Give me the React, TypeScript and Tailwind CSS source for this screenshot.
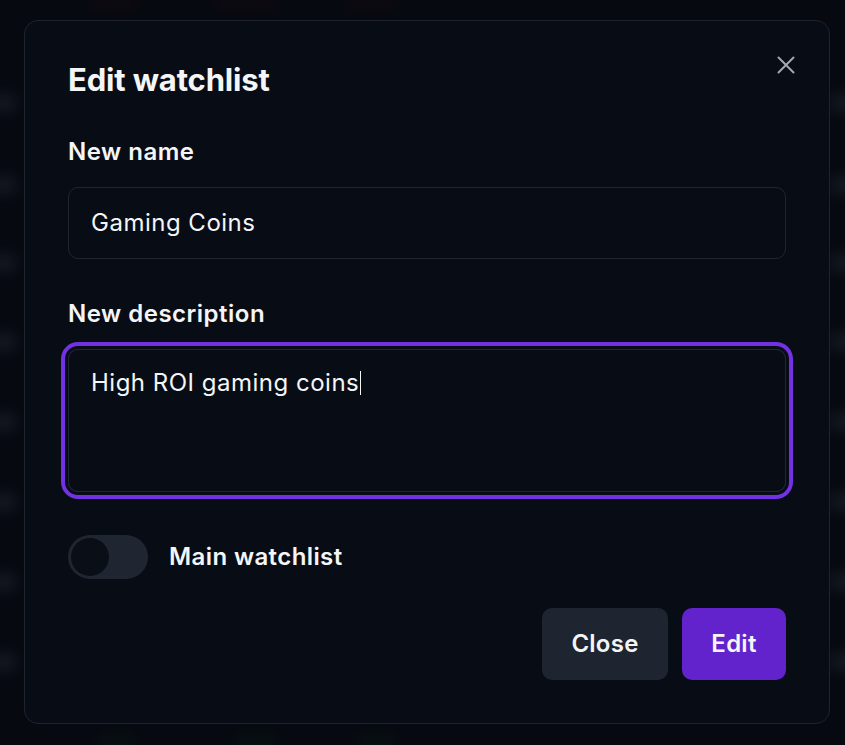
import * as React from "react";

const sideRows = [103, 185, 263, 342, 422, 502, 582, 662];

function Backdrop() {
  return (
    <div className="pointer-events-none absolute inset-0">
      {/* faint blurred table behind the overlay */}
      <div className="absolute left-[88px] top-[-8px] h-[20px] w-[52px] rounded bg-[#3a1218] opacity-15 blur-[7px]" />
      <div className="absolute left-[212px] top-[-8px] h-[20px] w-[66px] rounded bg-[#3a1218] opacity-15 blur-[7px]" />
      <div className="absolute left-[346px] top-[-8px] h-[20px] w-[52px] rounded bg-[#3a1218] opacity-15 blur-[7px]" />
      <div className="absolute left-[96px] top-[732px] h-[20px] w-[42px] rounded bg-[#0f3320] opacity-15 blur-[7px]" />
      <div className="absolute left-[234px] top-[732px] h-[20px] w-[44px] rounded bg-[#0f3320] opacity-15 blur-[7px]" />
      <div className="absolute left-[356px] top-[732px] h-[20px] w-[42px] rounded bg-[#0f3320] opacity-15 blur-[7px]" />
      {sideRows.map((y) => (
        <React.Fragment key={y}>
          <div
            className="absolute left-[-10px] h-[18px] w-[26px] rounded bg-[#2a2f3a] opacity-40 blur-[7px]"
            style={{ top: y - 9 }}
          />
          <div
            className="absolute left-[830px] h-[18px] w-[26px] rounded bg-[#2a2f3a] opacity-40 blur-[7px]"
            style={{ top: y - 9 }}
          />
        </React.Fragment>
      ))}
    </div>
  );
}

export default function App() {
  const [main, setMain] = React.useState(false);

  return (
    <div
      className="relative h-[745px] w-[845px] overflow-hidden bg-[#060910] pl-[24px] pt-[20px] text-[#f4f5f7]"
      style={{ fontFamily: "Inter, 'Noto Sans', sans-serif" }}
    >
      <Backdrop />
      <div className="relative flex h-[704px] w-[806px] flex-col rounded-[14px] border border-[#1d2430] bg-[#080c14] px-[43px] pt-[41px]">
        <button className="absolute right-[31px] top-[32px] flex h-[24px] w-[24px] items-center justify-center text-[#a3a7ae]">
          <svg width="18" height="18" viewBox="0 0 18 18" fill="none" stroke="currentColor" strokeWidth="2" strokeLinecap="round">
            <path d="M1.5 1.5 16.5 16.5M16.5 1.5 1.5 16.5" />
          </svg>
        </button>

        <h2 className="text-[31px] font-bold leading-[36px] tracking-[-0.15px]">Edit watchlist</h2>

        <label className="mt-[40px] text-[24px] font-semibold leading-[28px] tracking-[0.5px]">New name</label>
        <div className="mt-[21px] flex h-[72px] w-[718px] items-center rounded-[10px] border border-[#1f2632] px-[22px] text-[24px] tracking-[0.5px]">
          Gaming Coins
        </div>

        <label className="mt-[41px] text-[24px] font-semibold leading-[28px] tracking-[0.5px]">New description</label>
        <div className="mt-[21px] h-[143px] w-[718px] rounded-[10px] border border-[#1f2632] px-[22px] pt-[17px] text-[24px] leading-[30px] tracking-[0.5px] ring-[4px] ring-[#7232e3] ring-offset-[3px] ring-offset-[#080c14]">
          High ROI gaming coins
          <span className="ml-[1px] inline-block h-[24px] w-[1px] translate-y-[4px] bg-[#f4f5f7]" />
        </div>

        <div className="mt-[43px] flex items-center gap-[21px]">
          <button
            onClick={() => setMain(!main)}
            className="flex h-[44px] w-[80px] items-center rounded-full bg-[#1f2632] px-[3px]"
          >
            <span className="h-[38px] w-[38px] rounded-full bg-[#0a0e16]" />
          </button>
          <span className="text-[24px] font-semibold tracking-[0.4px]">Main watchlist</span>
        </div>

        <div className="mt-[29px] flex justify-end gap-[14px]">
          <button className="flex h-[72px] w-[126px] items-center justify-center rounded-[10px] bg-[#1e2530] text-[24px] font-semibold tracking-[0.25px]">
            Close
          </button>
          <button className="flex h-[72px] w-[104px] items-center justify-center rounded-[10px] bg-[#6323cc] text-[24px] font-semibold tracking-[0.25px]">
            Edit
          </button>
        </div>
      </div>
    </div>
  );
}
